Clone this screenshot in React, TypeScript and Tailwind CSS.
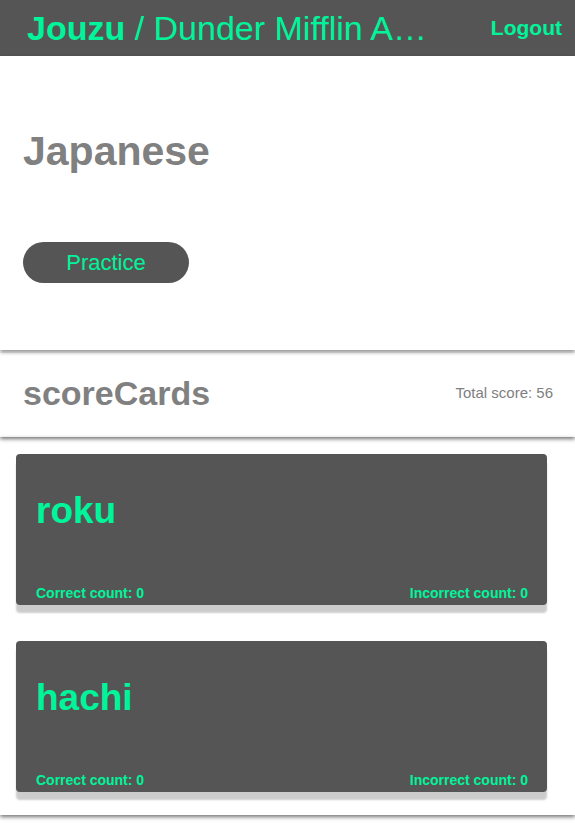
import React from 'react';

const green = 'text-[#00f59b]';

const ScoreCard = ({ word }: { word: string }) => (
  <div className="rounded-[4px] bg-[#555555] shadow-[0_8px_2px_rgba(0,0,0,0.2)] pl-5 pr-[19px] pt-[38px] pb-[1px]">
    <h3 className={`${green} text-[37px] font-bold leading-none`}>{word}</h3>
    <div className={`${green} flex justify-between text-[14px] font-bold mt-[54px]`}>
      <span>Correct count: 0</span>
      <span>Incorrect count: 0</span>
    </div>
  </div>
);

const App = () => {
  return (
    <div className="min-h-[823px] bg-white font-['Liberation_Sans',Arial,sans-serif] overflow-hidden">
      <nav className="h-[56px] bg-[#555555] flex items-center justify-between pl-[27px] pr-[13px]">
        <span className={`${green} text-[34px] whitespace-nowrap leading-none`}>
          <span className="font-bold">Jouzu</span> / Dunder Mifflin A…
        </span>
        <span className={`${green} text-[21px] font-bold`}>Logout</span>
      </nav>

      <section className="h-[294px] pl-[23px] pt-[75px] shadow-[0_2px_4px_rgba(0,0,0,0.45)] relative z-10">
        <h1 className="text-[41px] font-bold text-[#808080] leading-none">Japanese</h1>
        <button className={`mt-[70px] w-[166px] h-[41px] rounded-full bg-[#555555] ${green} text-[22px]`}>
          Practice
        </button>
      </section>

      <section className="mt-[3px] h-[84px] flex items-center justify-between pl-[23px] pr-[22px] shadow-[0_2px_4px_rgba(0,0,0,0.55)] relative z-10">
        <h2 className="text-[34px] font-bold text-[#808080] -mt-[3px]">scoreCards</h2>
        <span className="text-[15px] text-[#808080] -mt-[4px]">Total score: 56</span>
      </section>

      <section className="h-[378px] pl-4 pr-[28px] pt-[17px] flex flex-col gap-[36px] shadow-[0_2px_4px_rgba(0,0,0,0.55)]">
        <ScoreCard word="roku" />
        <ScoreCard word="hachi" />
      </section>
    </div>
  );
};

export default App;
